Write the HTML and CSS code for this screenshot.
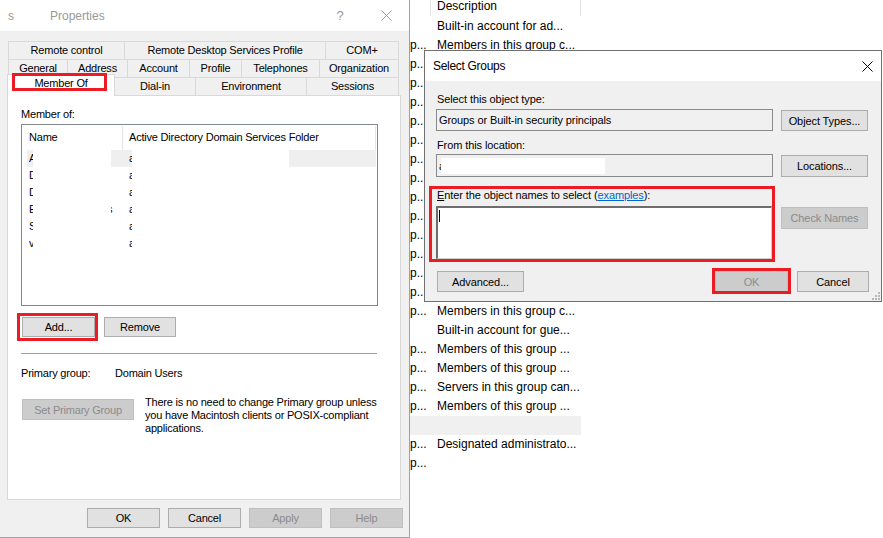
FILE: index.html
```html
<!DOCTYPE html>
<html>
<head>
<meta charset="utf-8">
<title>Properties - Member Of</title>
<link rel="stylesheet" href="styles.css">
</head>
<body>
<div class="desktop">

  <div class="bglist">
    <div class="bg-head"><div class="bg-c1"></div><div class="bg-c2">Description</div></div>
    <div class="bg-row"><span class="bg-c1"></span><span class="bg-c2">Built-in account for ad...</span></div>
    <div class="bg-row"><span class="bg-c1">p...</span><span class="bg-c2">Members in this group c...</span></div>
    <div class="bg-row"><span class="bg-c1">p...</span><span class="bg-c2">Members of this group ...</span></div>
    <div class="bg-row"><span class="bg-c1">p...</span><span class="bg-c2">Members of this group ...</span></div>
    <div class="bg-row"><span class="bg-c1">p...</span><span class="bg-c2">Members of this group ...</span></div>
    <div class="bg-row"><span class="bg-c1">p...</span><span class="bg-c2">Members of this group ...</span></div>
    <div class="bg-row"><span class="bg-c1">p...</span><span class="bg-c2">Members of this group ...</span></div>
    <div class="bg-row"><span class="bg-c1">p...</span><span class="bg-c2">Members of this group ...</span></div>
    <div class="bg-row"><span class="bg-c1">p...</span><span class="bg-c2">Members of this group ...</span></div>
    <div class="bg-row"><span class="bg-c1">p...</span><span class="bg-c2">Members of this group ...</span></div>
    <div class="bg-row"><span class="bg-c1">p...</span><span class="bg-c2">Members of this group ...</span></div>
    <div class="bg-row"><span class="bg-c1">p...</span><span class="bg-c2">Members of this group ...</span></div>
    <div class="bg-row"><span class="bg-c1">p...</span><span class="bg-c2">Members of this group ...</span></div>
    <div class="bg-row"><span class="bg-c1">p...</span><span class="bg-c2">Members of this group ...</span></div>
    <div class="bg-row"><span class="bg-c1">p...</span><span class="bg-c2">Members of this group ...</span></div>
    <div class="bg-row"><span class="bg-c1">p...</span><span class="bg-c2">Members in this group c...</span></div>
    <div class="bg-row"><span class="bg-c1"></span><span class="bg-c2">Built-in account for gue...</span></div>
    <div class="bg-row"><span class="bg-c1">p...</span><span class="bg-c2">Members of this group ...</span></div>
    <div class="bg-row"><span class="bg-c1">p...</span><span class="bg-c2">Members of this group ...</span></div>
    <div class="bg-row"><span class="bg-c1">p...</span><span class="bg-c2">Servers in this group can...</span></div>
    <div class="bg-row"><span class="bg-c1">p...</span><span class="bg-c2">Members of this group ...</span></div>
    <div class="bg-row sel"><span class="bg-c1"></span><span class="bg-c2"></span></div>
    <div class="bg-row"><span class="bg-c1">p...</span><span class="bg-c2">Designated administrato...</span></div>
    <div class="bg-row"><span class="bg-c1">p...</span><span class="bg-c2"></span></div>
  </div>

  <div class="topline"></div>

  <div class="props">
    <div class="ptitle">
      <span class="ps">s</span>
      <span class="pname">Properties</span>
      <span class="phelp">?</span>
      <span class="pclose"><svg width="11" height="11" viewBox="0 0 11 11"><path d="M0.5 0.5L10.5 10.5M10.5 0.5L0.5 10.5" stroke="#9a9a9a" stroke-width="1" fill="none"/></svg></span>
    </div>
    <div class="pbody">
      <div class="tabs">
        <div class="tabrow r1">
          <div class="tab">Remote control</div>
          <div class="tab">Remote Desktop Services Profile</div>
          <div class="tab last">COM+</div>
        </div>
        <div class="tabrow r2">
          <div class="tab">General</div>
          <div class="tab">Address</div>
          <div class="tab">Account</div>
          <div class="tab">Profile</div>
          <div class="tab">Telephones</div>
          <div class="tab last">Organization</div>
        </div>
        <div class="tabrow r3">
          <div class="tab cur">Member Of<span class="redbox rb-tab"></span></div>
          <div class="tab nl">Dial-in</div>
          <div class="tab">Environment</div>
          <div class="tab last">Sessions</div>
        </div>
      </div>

      <div class="panel">
        <div class="plabel">Member of:</div>
        <div class="listbox">
          <div class="lhead">
            <div class="lh1">Name</div>
            <div class="lh2">Active Directory Domain Services Folder</div>
          </div>
          <div class="lrow sel">
            <span class="lc1"><span class="clip">A</span><span class="redact rn"></span></span>
            <span class="lc2"><span class="clip c3">a</span><span class="redact rf"></span></span>
          </div>
          <div class="lrow">
            <span class="lc1"><span class="clip">D</span></span>
            <span class="lc2"><span class="clip c3">a</span></span>
          </div>
          <div class="lrow">
            <span class="lc1"><span class="clip">D</span></span>
            <span class="lc2"><span class="clip c3">a</span></span>
          </div>
          <div class="lrow">
            <span class="lc1"><span class="clip">E</span><span class="redact rn"></span><span class="stray"><span>s</span></span></span>
            <span class="lc2"><span class="clip c3">a</span></span>
          </div>
          <div class="lrow">
            <span class="lc1"><span class="clip">S</span></span>
            <span class="lc2"><span class="clip c3">a</span></span>
          </div>
          <div class="lrow">
            <span class="lc1"><span class="clip">v</span></span>
            <span class="lc2"><span class="clip c3">a</span></span>
          </div>
        </div>

        <div class="addrow">
          <span class="hl"><button class="btn b-add">Add...</button><span class="redbox rb-add"></span></span>
          <button class="btn b-rem">Remove</button>
        </div>
        <div class="sep"></div>
        <div class="pgrow"><span class="pglabel">Primary group:</span><span>Domain Users</span></div>
        <div class="inforow">
          <button class="btn dis b-spg">Set Primary Group</button>
          <div class="info">There is no need to change Primary group unless<br>you have Macintosh clients or POSIX-compliant<br>applications.</div>
        </div>
      </div>

      <div class="pfooter">
        <button class="btn fbtn">OK</button>
        <button class="btn fbtn">Cancel</button>
        <button class="btn fbtn dis">Apply</button>
        <button class="btn fbtn dis">Help</button>
      </div>
    </div>
  </div>

  <div class="sg">
    <div class="sgtitle">
      <span class="sgname">Select Groups</span>
      <span class="sgclose"><svg width="11" height="11" viewBox="0 0 11 11"><path d="M0.5 0.5L10.5 10.5M10.5 0.5L0.5 10.5" stroke="#000" stroke-width="1" fill="none"/></svg></span>
    </div>
    <div class="sgbody">
      <div class="slbl">Select this object type:</div>
      <div class="frow f1">
        <div class="tbox t1">Groups or Built-in security principals</div>
        <button class="btn sbtn s1">Object Types...</button>
      </div>
      <div class="slbl l2">From this location:</div>
      <div class="frow f2">
        <div class="tbox t2"><span class="clip c2">a</span><span class="redact rl"></span></div>
        <button class="btn sbtn s2">Locations...</button>
      </div>
      <div class="frow f3">
        <div class="entry">
          <div class="slbl"><u>E</u>nter the object names to select (<a class="link" href="#">examples</a>):</div>
          <div class="tarea"><span class="caret"></span></div>
          <span class="redbox rb-entry"></span>
        </div>
        <button class="btn sbtn dis s3">Check Names</button>
      </div>
      <div class="brow">
        <button class="btn b-adv">Advanced...</button>
        <span class="hl okwrap"><button class="btn dis b-ok">OK</button><span class="redbox rb-ok"></span></span>
        <button class="btn b-cancel">Cancel</button>
      </div>
      <svg class="grip" width="9" height="9" viewBox="0 0 9 9">
        <rect x="7" y="1" width="2" height="2" fill="#b8b8b8"/>
        <rect x="4" y="4" width="2" height="2" fill="#b8b8b8"/>
        <rect x="7" y="4" width="2" height="2" fill="#b8b8b8"/>
        <rect x="1" y="7" width="2" height="2" fill="#b8b8b8"/>
        <rect x="4" y="7" width="2" height="2" fill="#b8b8b8"/>
        <rect x="7" y="7" width="2" height="2" fill="#b8b8b8"/>
      </svg>
    </div>
  </div>

</div>
</body>
</html>
```
FILE: styles.css
```css
* { box-sizing: border-box; }
html, body { margin: 0; padding: 0; }
body {
  width: 883px;
  height: 538px;
  overflow: hidden;
  background: #fff;
  font-family: "Liberation Sans", Arial, sans-serif;
  font-size: 11px;
  color: #000;
}
.desktop { position: relative; width: 883px; height: 538px; }

/* ---------- background list view ---------- */
.bglist {
  position: absolute;
  left: 410px;
  top: 0;
  width: 473px;
  font-size: 12px;
}
.bg-head { display: flex; height: 17px; line-height: 12px; }
.bg-c1 { width: 21px; flex: none; overflow: hidden; white-space: nowrap; }
.bg-c2 { width: 150px; flex: none; padding-left: 6px; overflow: hidden; white-space: nowrap; }
.bg-head .bg-c1, .bg-head .bg-c2 { height: 16px; border-right: 1px solid #e5e5e5; }
.bg-row { display: flex; width: 171px; height: 19px; line-height: 19px; }
.bg-row.sel { background: #f0f0f0; }

.topline {
  position: absolute;
  left: 0; top: 0;
  width: 225px; height: 1px;
  background: #5d5050;
}

/* ---------- common ---------- */
.btn {
  font-family: inherit;
  font-size: inherit;
  letter-spacing: inherit;
  color: #000;
  background: #e1e1e1;
  border: 1px solid #adadad;
  padding: 0;
  margin: 0;
  text-align: center;
  white-space: nowrap;
  flex: none;
}
.btn.dis { background: #cccccc; border-color: #bfbfbf; color: #8b8b8b; }
.hl { position: relative; display: inline-flex; flex: none; }
.redbox {
  position: absolute;
  border: 3px solid #ec1c24;
  pointer-events: none;
  z-index: 5;
}
.clip { display: inline-block; width: 4px; overflow: hidden; white-space: nowrap; flex: none; }
.redact { display: inline-block; background: #fff; flex: none; }

/* ---------- Properties window ---------- */
.props {
  position: absolute;
  left: 0; top: 0;
  width: 410px; height: 538px;
  background: #f0f0f0;
  border-right: 1px solid #a0a0a0;
  border-bottom: 1px solid #a0a0a0;
  letter-spacing: -0.2px;
}
.ptitle {
  height: 31px;
  background: #fff;
  display: flex;
  align-items: center;
  font-size: 12px;
  color: #999;
  letter-spacing: 0;
}
.ps { width: 50px; padding-left: 8px; }
.pname { flex: 1; }
.phelp { width: 46px; text-align: center; font-size: 13px; }
.pclose { width: 46px; height: 31px; display: flex; align-items: center; justify-content: center; }

.pbody { padding: 10px 7px 0 7px; }

.tabs { margin-left: 1px; }
.tabrow { display: grid; grid-template-rows: 18px; height: 18px; }
.r1 { grid-template-columns: 116px 201px 74px; }
.r2 { grid-template-columns: 59px 60px 62px 52px 78px 80px; }
.r3 { grid-template-columns: 108px 80px 111px 93px; margin-left: -1px; }
.tab {
  height: 18px;
  border-top: 1px solid #d9d9d9;
  border-left: 1px solid #d9d9d9;
  line-height: 17px;
  text-align: center;
  white-space: nowrap;
  overflow: hidden;
}
.tab.last { border-right: 1px solid #d9d9d9; }
.tab.nl { border-left: none; }
.tab.cur {
  position: relative;
  z-index: 2;
  overflow: visible;
  height: 22px;
  margin-top: -3px;
  background: #fff;
  border-right: 1px solid #d9d9d9;
  padding-top: 1px;
  line-height: 14px;
}
.rb-tab { left: 4px; top: -2px; width: 95px; height: 18px; }

.panel {
  width: 394px;
  height: 405px;
  background: #fff;
  border: 1px solid #d9d9d9;
  padding: 11px 0 0 13px;
}
.plabel { line-height: 14px; }
.listbox {
  width: 357px;
  height: 182px;
  margin-top: 3px;
  border: 1px solid #828790;
  overflow: hidden;
}
.lhead { display: flex; height: 25px; line-height: 25px; }
.lh1 { width: 101px; padding-left: 7px; border-right: 1px solid #e5e5e5; margin-top: 1px; line-height: 23px; }
.lh2 { width: 253px; padding-left: 6px; border-right: 1px solid #e5e5e5; margin-top: 1px; line-height: 23px; white-space: nowrap; }
.lrow { display: flex; width: 349px; height: 17px; line-height: 17px; margin-left: 5px; }
.lrow.sel { background: #efefef; }
.lc1 { width: 95px; padding-left: 2px; display: flex; flex: none; }
.lc2 { padding-left: 7px; display: flex; }
.c3 { width: 3px; }
.rn { width: 78px; height: 17px; }
.rf { width: 157px; height: 17px; }
.stray { display: inline-block; width: 2px; overflow: hidden; flex: none; }
.stray span { display: inline-block; margin-left: -4px; }

.addrow { display: flex; gap: 9px; margin-top: 11px; margin-left: 1px; }
.b-add { width: 73px; height: 20px; }
.b-rem { width: 72px; height: 20px; }
.rb-add { left: -5px; top: -4px; right: -3px; bottom: -4px; }
.sep { width: 356px; height: 1px; background: #a0a0a0; margin-top: 16px; }
.pgrow { display: flex; margin-top: 12px; line-height: 14px; }
.pglabel { width: 94px; }
.inforow { display: flex; align-items: flex-start; margin-top: 16px; }
.b-spg { width: 112px; height: 21px; margin-top: 3px; margin-left: 1px; }
.info { margin-left: 11px; line-height: 13px; white-space: nowrap; }

.pfooter { display: flex; justify-content: flex-end; gap: 8px; margin-top: 8px; margin-right: -1px; }
.fbtn { width: 73px; height: 20px; }

/* ---------- Select Groups dialog ---------- */
.sg {
  position: absolute;
  left: 424px; top: 50px;
  width: 458px; height: 252px;
  border: 1px solid #707070;
  background: #f0f0f0;
  letter-spacing: -0.1px;
}
.sgtitle {
  height: 30px;
  background: #fff;
  display: flex;
  align-items: center;
  padding-left: 8px;
  font-size: 12px;
  letter-spacing: -0.3px;
}
.sgname { flex: 1; }
.sgclose { width: 28px; height: 30px; display: flex; align-items: center; justify-content: center; }
.sgbody { position: relative; height: 220px; padding: 11px 12px 0 11px; }
.slbl { line-height: 14px; padding-left: 1px; white-space: nowrap; }
.l2 { margin-top: 7px; }
.frow { display: flex; align-items: flex-start; gap: 8px; }
.f1 { margin-top: 3px; }
.f2 { margin-top: 2px; }
.f3 { margin-top: 11px; }
.tbox {
  width: 337px;
  border: 1px solid #8a8a8a;
  background: #f0f0f0;
  padding-left: 2px;
  white-space: nowrap;
  flex: none;
}
.t1 { height: 22px; line-height: 20px; }
.t2 { height: 23px; display: flex; align-items: center; }
.c2 { width: 2px; }
.rl { width: 164px; height: 16px; }
.sbtn { width: 87px; }
.s1 { height: 21px; margin-top: 1px; }
.s2 { height: 22px; margin-top: 1px; }
.s3 { height: 22px; margin-top: 19px; }
.entry { position: relative; width: 337px; flex: none; }
.link { color: #0066cc; text-decoration: underline; }
.tarea {
  width: 336px;
  height: 53px;
  margin-top: 4px;
  background: #fff;
  border-top: 2px solid #6d6d6d;
  border-left: 2px solid #6d6d6d;
  border-right: 1px solid #d0d0d0;
  border-bottom: 1px solid #d0d0d0;
  padding: 2px 0 0 1px;
}
.caret { display: block; width: 1px; height: 12px; background: #000; }
.rb-entry { left: -7px; top: -2px; right: -2px; bottom: -3px; }
.brow { display: flex; align-items: flex-start; margin-top: 12px; }
.b-adv { width: 87px; height: 21px; margin-left: 1px; }
.okwrap { margin-left: auto; }
.b-ok { width: 73px; height: 21px; }
.b-cancel { width: 72px; height: 21px; margin-left: 9px; }
.rb-ok { left: -3px; top: -3px; right: -3px; bottom: -2px; }
.grip { position: absolute; right: 1px; bottom: 1px; }
```
